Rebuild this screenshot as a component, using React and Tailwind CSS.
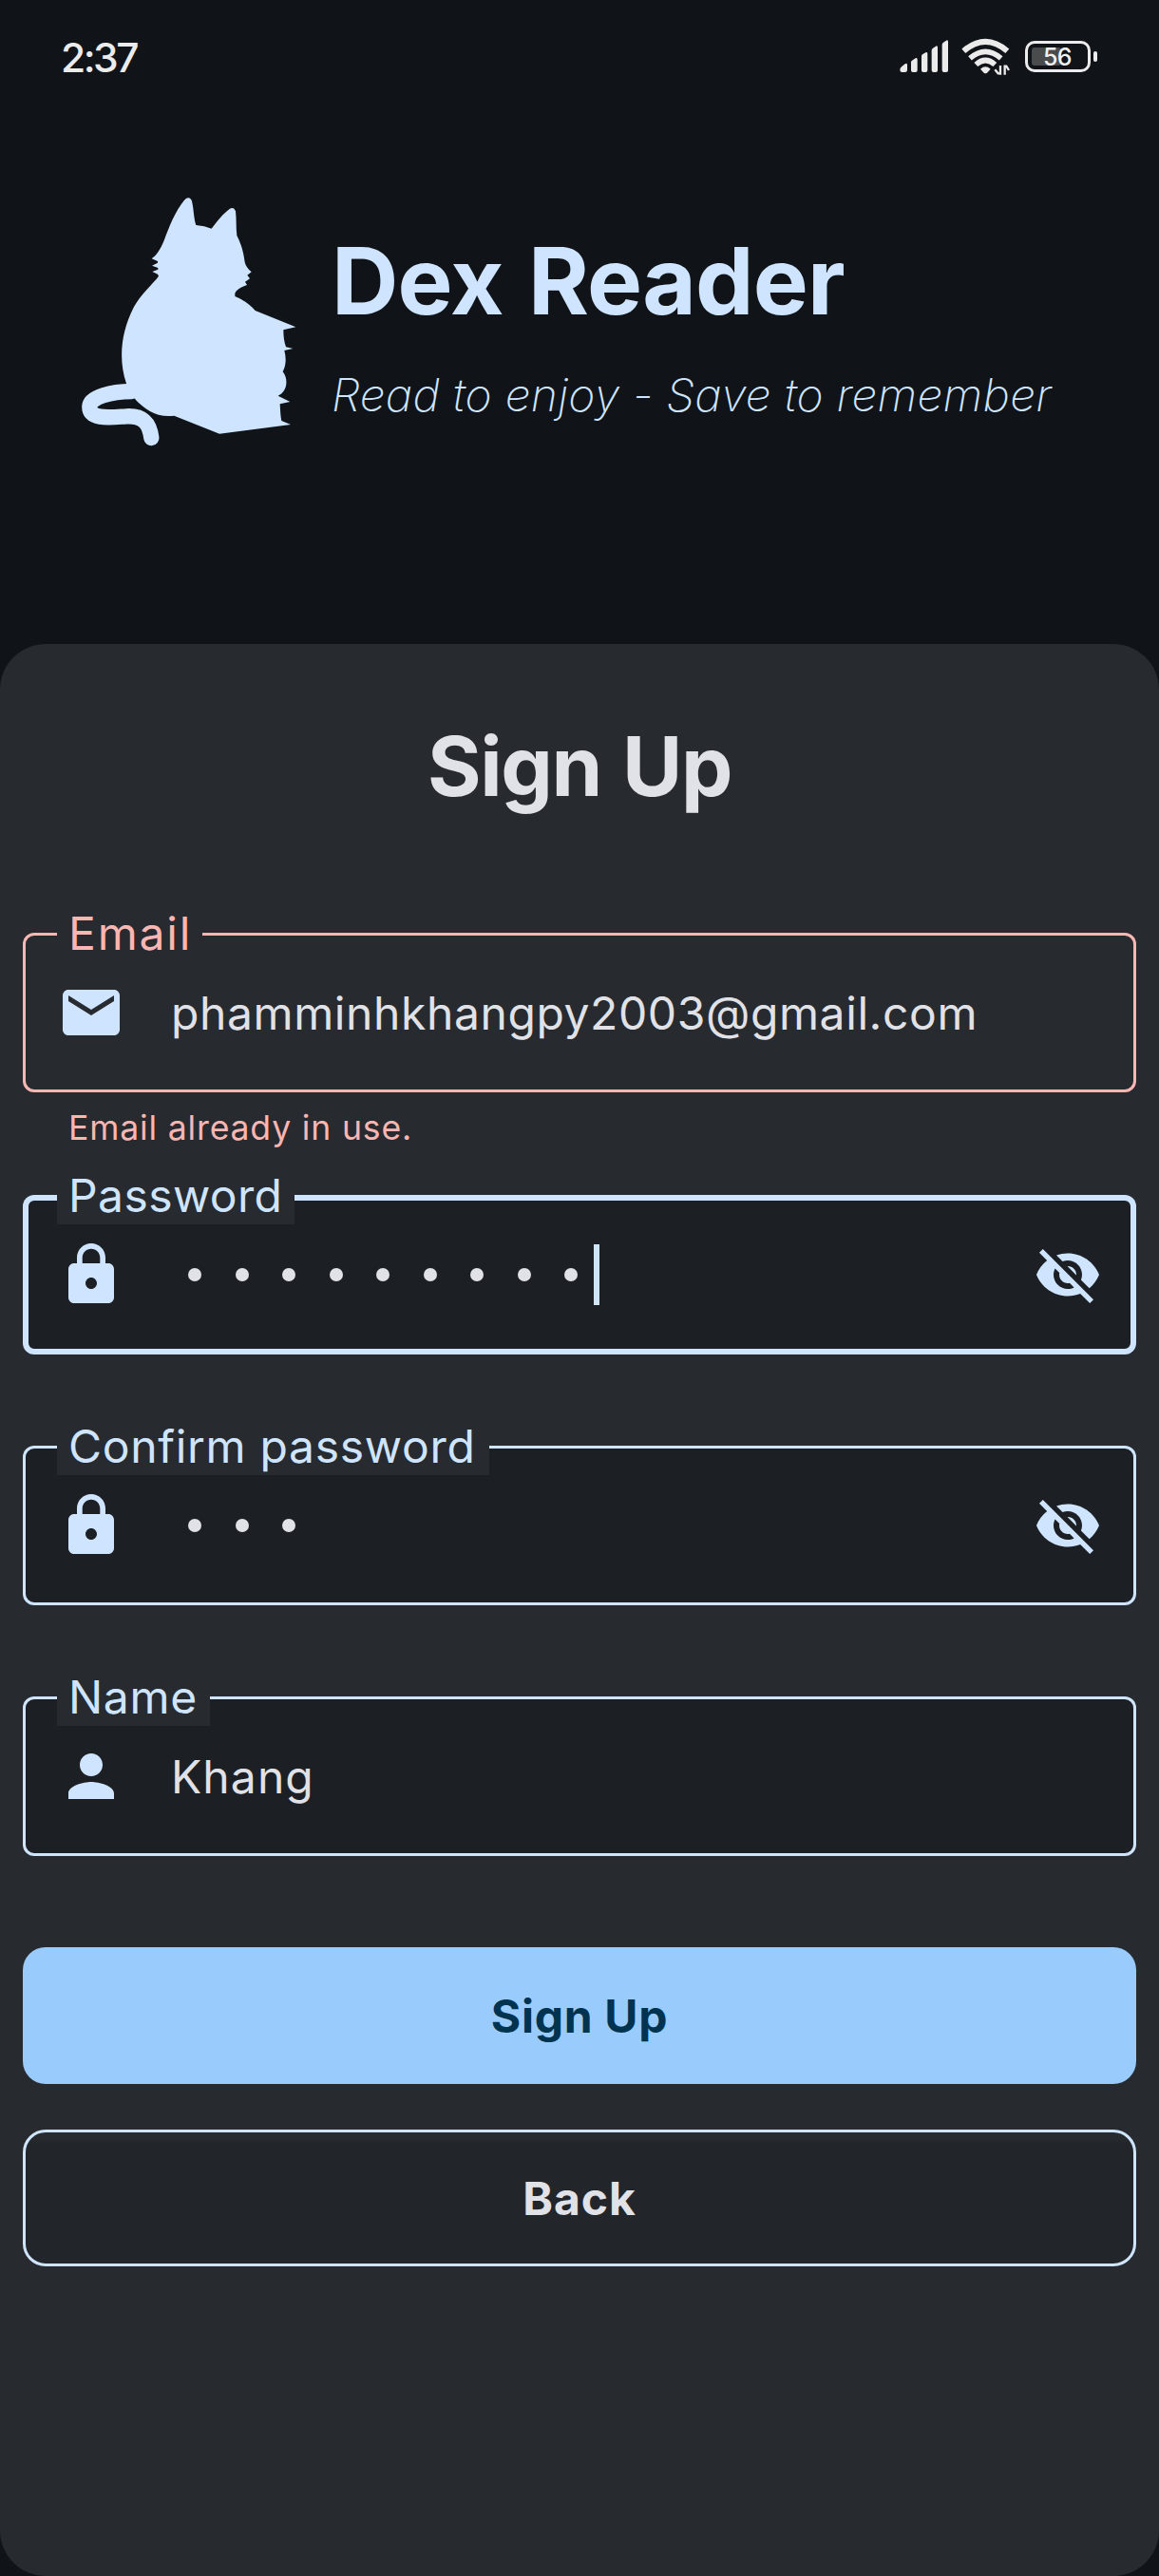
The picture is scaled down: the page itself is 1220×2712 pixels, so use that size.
import React from 'react';
import { MdEmail, MdLock, MdPerson, MdVisibilityOff } from 'react-icons/md';

function SignalIcon() {
  return (
    <svg width="52" height="36" viewBox="0 0 156 108" fill="#ebebeb">
      <path d="M1 95 Q1 89 6 85 L17 76 Q24 71 24 79 V94 Q24 102 17 102 H8 Q1 102 1 95Z" />
      <path d="M36 70 Q36 67 39 65 L50 58 Q56 55 56 62 V96 Q56 102 50 102 H42 Q36 102 36 96Z" />
      <path d="M69 52 Q69 48 72 46 L82 40 Q88 37 88 44 V96 Q88 102 82 102 H75 Q69 102 69 96Z" />
      <path d="M101 33 Q101 30 104 27 L114 20 Q120 17 120 24 V96 Q120 102 114 102 H107 Q101 102 101 96Z" />
      <path d="M134 15 Q134 12 137 9 L147 2 Q153 -1 153 6 V96 Q153 102 147 102 H140 Q134 102 134 96Z" />
    </svg>
  );
}

function WifiIcon() {
  return (
    <svg width="52" height="40" viewBox="0 0 156 120" fill="none" stroke="#ebebeb">
      <path d="M7 41 Q76 -18 145 41" strokeWidth="18" />
      <path d="M27 64 Q76 22 125 64" strokeWidth="17" />
      <path d="M46 84 Q76 57 106 84" strokeWidth="17" />
      <path d="M60 98 Q76 84 92 98 L81 110 Q76 114 71 110Z" fill="#ebebeb" stroke="none" />
      <path d="M123 87 V116 M106 100 L116 112 H124" strokeWidth="7" />
      <path d="M137 116 V89 H142 L150 102" strokeWidth="7" />
    </svg>
  );
}

function Battery() {
  return (
    <div className="flex items-center gap-[3px]">
      <div className="flex h-[33px] w-[69px] rounded-[10px] border-[3px] border-[#ebebeb] p-1">
        <div className="h-full w-[31px] rounded-[3px] bg-[#4a4b4d]">
          <div className="w-[56px] pl-[12px] text-[25px] leading-[20px] font-medium tracking-[-0.8px] text-[#f1f1f1]">56</div>
        </div>
      </div>
      <div className="h-[11px] w-[4px] rounded-[2px] bg-[#ebebeb]" />
    </div>
  );
}

function CatLogo() {
  return (
    <svg className="h-[300px] w-[280px] shrink-0" viewBox="0 0 840 900" fill="#cfe5ff">
      <path d="M299 247 C315 236 327 216 338 190 C352 151 373 97 402 62 Q416 48 425 62 C432 84 431 118 439 141 Q466 143 488 152 C506 128 526 103 546 89 Q558 82 564 97 C567 122 565 150 568 174 C584 206 589 229 593 258 C596 270 603 280 614 289 L601 299 L609 310 L594 320 L600 330 C582 336 567 345 562 356 V366 C589 377 611 392 626 411 L754 463 L715 472 C715 492 717 509 723 526 L745 531 L718 537 C724 560 724 584 713 604 C732 627 727 668 698 680 L736 699 L704 706 C705 727 706 745 709 759 L738 771 L513 800 L370 743 C317 751 275 721 248 692 L219 641 C193 565 202 478 243 399 C267 356 301 329 321 302 L318 296 L301 288 L319 281 V276 L300 269 L318 260 V255 Z" />
      <path d="M236 666 C174 667 103 683 103 715 C103 757 169 748 219 745 C272 742 292 766 298 813" fill="none" stroke="#cfe5ff" strokeWidth="49" strokeLinecap="round" />
    </svg>
  );
}

function Dots({ count }) {
  return (
    <div className="ml-[18px] flex gap-[35.5px]">
      {Array.from({ length: count }, (_, i) => (
        <div key={i} className="size-[14px] rounded-full bg-[#e0e2e8]" />
      ))}
    </div>
  );
}

function Field({ label, labelClass, boxClass, icon: Icon, children, trailing }) {
  return (
    <div className={'relative flex h-[168px] items-center rounded-[12px] px-9 ' + boxClass}>
      <div className={'absolute -top-[31px] left-9 h-[62px] bg-[#272a2f] pl-[12px] text-[48px] leading-[64px] whitespace-nowrap ' + labelClass}>
        {label}
      </div>
      <Icon className="size-[72px] shrink-0 text-[#cfe5ff]" />
      <div className="ml-12 flex flex-1 items-center text-[48px] leading-[64px] text-[#e0e2e8]">{children}</div>
      {trailing}
    </div>
  );
}

const plain = 'bg-[#1c2024] shadow-[inset_0_0_0_3px_#cfe5ff] ';
const focused = 'bg-[#1c2024] shadow-[inset_0_0_0_6px_#cfe5ff] ';
const error = 'shadow-[inset_0_0_0_3px_#f9b6b2] ';

export default function App() {
  return (
    <div className="flex h-[2712px] w-[1220px] flex-col bg-[#101418] font-['Inter',sans-serif]">
      <header className="h-[678px] shrink-0">
        <div className="flex h-[119px] items-center pr-[65px] pl-[64px]">
          <div className="pt-[2px] text-[42.5px] leading-[60px] font-medium tracking-[-2.5px] text-[#ebebeb]">2:37</div>
          <div className="ml-auto flex items-center">
            <SignalIcon />
            <div className="w-[13px]" />
            <WifiIcon />
            <div className="w-[15px]" />
            <Battery />
          </div>
        </div>
        <div className="mt-[71px] flex pl-[60px] text-[#cfe5ff]">
          <CatLogo />
          <div className="ml-[9px] whitespace-nowrap">
            <h1 className="mt-[51px] text-[97.5px] leading-[110px] font-bold tracking-[-0.8px] [word-spacing:4px]">Dex Reader</h1>
            <p className="mt-[35px] text-[48px] leading-[60px] font-[200] tracking-[0.22px] italic">Read to enjoy - Save to remember</p>
          </div>
        </div>
      </header>

      <main className="flex flex-1 flex-col rounded-[48px] bg-[#272a2f] px-6 pt-[79px]">
        <h2 className="text-center text-[86.5px] leading-[100px] font-bold tracking-[-1.4px] text-[#e0e2e8] [word-spacing:3px]">Sign Up</h2>

        <div className="mt-[125px]">
          <Field label="Email" icon={MdEmail} boxClass={error} labelClass="w-[153px] text-[#f9b6b2] tracking-[1.8px]">
            <span className="pt-[2px] tracking-[0.6px]">phamminhkhangpy2003@gmail.com</span>
          </Field>
          <p className="mt-[18px] pl-[48px] text-[35.6px] leading-[40px] tracking-[0.83px] text-[#f9b6b2]">Email already in use.</p>
        </div>

        <div className="mt-[50px] flex flex-col gap-24">
          <Field
            label="Password"
            icon={MdLock}
            boxClass={focused}
            labelClass="w-[250px] text-[#cfe5ff] tracking-[0.4px]"
            trailing={<MdVisibilityOff className="size-[72px] text-[#cfe5ff]" />}
          >
            <Dots count={9} />
            <div className="ml-[17px] h-[64px] w-[6px] bg-[#cfe5ff]" />
          </Field>
          <Field
            label="Confirm password"
            icon={MdLock}
            boxClass={plain}
            labelClass="w-[455px] text-[#cfe5ff] tracking-[0.7px]"
            trailing={<MdVisibilityOff className="size-[72px] text-[#cfe5ff]" />}
          >
            <Dots count={3} />
          </Field>
          <Field label="Name" icon={MdPerson} boxClass={plain} labelClass="w-[161px] text-[#cfe5ff] tracking-[0.7px]">
            <span className="pt-[2px] tracking-[1.1px]">Khang</span>
          </Field>
          <div className="flex flex-col gap-12">
            <button className="h-[144px] rounded-[24px] bg-[#99ccfd] pt-[2px] text-[48px] font-bold tracking-[0.7px] text-[#003350]">Sign Up</button>
            <button className="h-[144px] rounded-[24px] border-[3px] border-[#cfe5ff] bg-linear-to-b from-[#272a2f] from-[5%] via-[#22262a] via-[8%] to-[#22262a] to-[92%] pt-[2px] text-[48px] font-bold tracking-[1px] text-[#e0e2e8]">Back</button>
          </div>
        </div>
      </main>
    </div>
  );
}
